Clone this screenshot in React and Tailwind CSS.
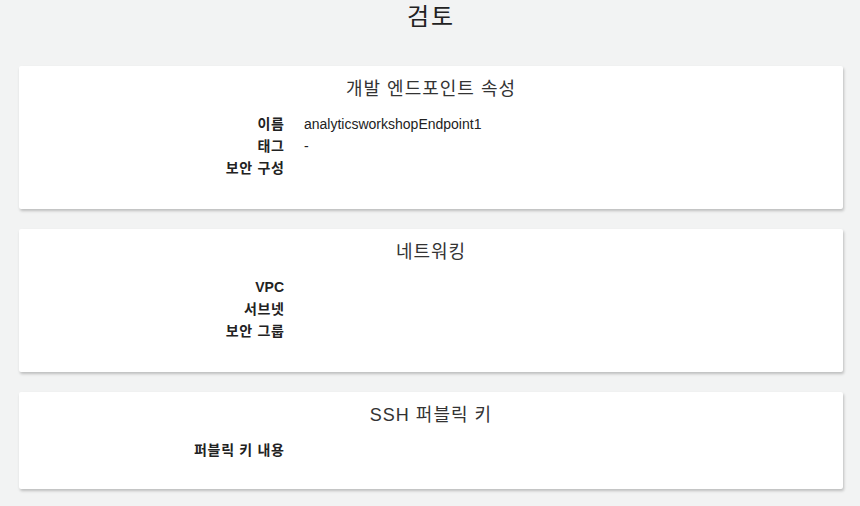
export default function App() {
  const font = { fontFamily: '"Liberation Sans", "Noto Sans CJK KR", sans-serif' };
  const Row = ({ label, value, latin }) => (
    <div className="flex h-[22px] items-center text-[14px]">
      <div className="w-[265px] text-right font-bold text-[#222]">
        <span className={latin ? "" : "tracking-[0.7px] mr-[-0.7px]"}>{label}</span>
      </div>
      <div className="ml-[20px] text-[#222]">{value}</div>
    </div>
  );
  const Card = ({ title, rows, pb }) => (
    <div className={"bg-white rounded-[2px] shadow-[1px_2px_3px_rgba(0,0,0,0.22)] pt-[9px] " + pb}>
      <div className="h-[28px] leading-[28px] text-center text-[18px] text-[#333] tracking-[1px]">{title}</div>
      <div className="mt-[10px] flex flex-col">
        {rows.map((r) => (
          <Row key={r[0]} label={r[0]} value={r[1]} latin={r[2]} />
        ))}
      </div>
    </div>
  );
  return (
    <div className="min-h-[506px] bg-[#f2f3f3] pl-[19px] pr-[17px]" style={font}>
      <div className="h-[34px] leading-[34px] text-center text-[24px] text-[#222] tracking-[2px]">검토</div>
      <div className="mt-[32px] flex flex-col gap-[20px]">
        <Card
          pb="pb-[30px]"
          title="개발 엔드포인트 속성"
          rows={[
            ["이름", "analyticsworkshopEndpoint1"],
            ["태그", "-"],
            ["보안 구성", ""],
          ]}
        />
        <Card
          pb="pb-[30px]"
          title="네트워킹"
          rows={[
            ["VPC", "", true],
            ["서브넷", ""],
            ["보안 그룹", ""],
          ]}
        />
        <Card pb="pb-[28px]" title="SSH 퍼블릭 키" rows={[["퍼블릭 키 내용", ""]]} />
      </div>
    </div>
  );
}
